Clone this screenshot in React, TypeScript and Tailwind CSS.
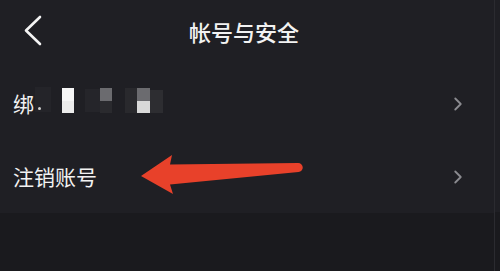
import { ChevronRight } from "lucide-react";

const cjk = { fontFamily: '"Noto Sans CJK SC", "Noto Sans", sans-serif' };

// pixelated redaction over the bound phone number
const mosaic = [
  { x: 21, y: -16, w: 16, h: 25, c: "#242429" },
  { x: 48, y: -15, w: 12, h: 13, c: "#f6f6f6" },
  { x: 48, y: -2, w: 12, h: 12, c: "#ececec" },
  { x: 71, y: -14, w: 15, h: 23, c: "#25252a" },
  { x: 86, y: -15, w: 12, h: 13, c: "#6b6b6f" },
  { x: 86, y: -2, w: 12, h: 12, c: "#2a2a2e" },
  { x: 111, y: -15, w: 12, h: 25, c: "#29292d" },
  { x: 123, y: -15, w: 13, h: 13, c: "#6b6b6f" },
  { x: 123, y: -2, w: 13, h: 12, c: "#d9d9d9" },
  { x: 136, y: -13, w: 13, h: 23, c: "#2d2d31" },
];

function Row({ children }: { children: React.ReactNode }) {
  return (
    <div className="flex h-[73px] items-center justify-between pl-[13px] pr-[25px]">
      <div className="text-[21px] leading-none text-[#f2f2f2]" style={cjk}>
        {children}
      </div>
      <ChevronRight className="h-[22px] w-[22px] text-[#8b8b90]" strokeWidth={2} />
    </div>
  );
}

export default function App() {
  return (
    <div className="relative flex h-[271px] w-[500px] overflow-hidden bg-[#1f1f24]">
      <div className="flex w-[494px] flex-col">
        <div className="relative flex h-[62px] items-center justify-center">
          <svg className="absolute left-[22px] top-[14px]" width="22" height="32" viewBox="0 0 22 32">
            <path d="M18 3 L4 16.5 L18 30" fill="none" stroke="#f4f4f4" strokeWidth="2.6" strokeLinecap="round" strokeLinejoin="round" />
          </svg>
          <span className="pr-[6px] text-[22px] font-medium leading-none text-[#f2f2f2]" style={cjk}>
            帐号与安全
          </span>
        </div>
        <div className="pt-[5px]">
          <Row>
            <span className="relative inline-block">
              绑
              {mosaic.map((m, i) => (
                <span
                  key={i}
                  className="absolute"
                  style={{ left: m.x + 1, top: m.y + 10, width: m.w, height: m.h, background: m.c }}
                />
              ))}
              <span className="absolute left-[25px] top-[14px] h-[3px] w-[3px] rounded-full bg-[#d0d0d0]" />
            </span>
          </Row>
          <Row>注销账号</Row>
        </div>
        <div className="flex-1 bg-[#1a1a1e]" />
      </div>
      <div className="w-px bg-[#2b2b30]" />
      <div className="flex flex-1 flex-col">
        <div className="h-[212px]" />
        <div className="flex-1 bg-[#1a1a1e]" />
      </div>
      <svg className="pointer-events-none absolute left-0 top-0" width="500" height="271" viewBox="0 0 500 271">
        <path
          d="M141 176 L172 155 L170 164.5 L298 163 A4.5 4.5 0 0 1 298.5 172 L170 184.5 L173 194 Z"
          fill="#e8412a"
        />
      </svg>
    </div>
  );
}
